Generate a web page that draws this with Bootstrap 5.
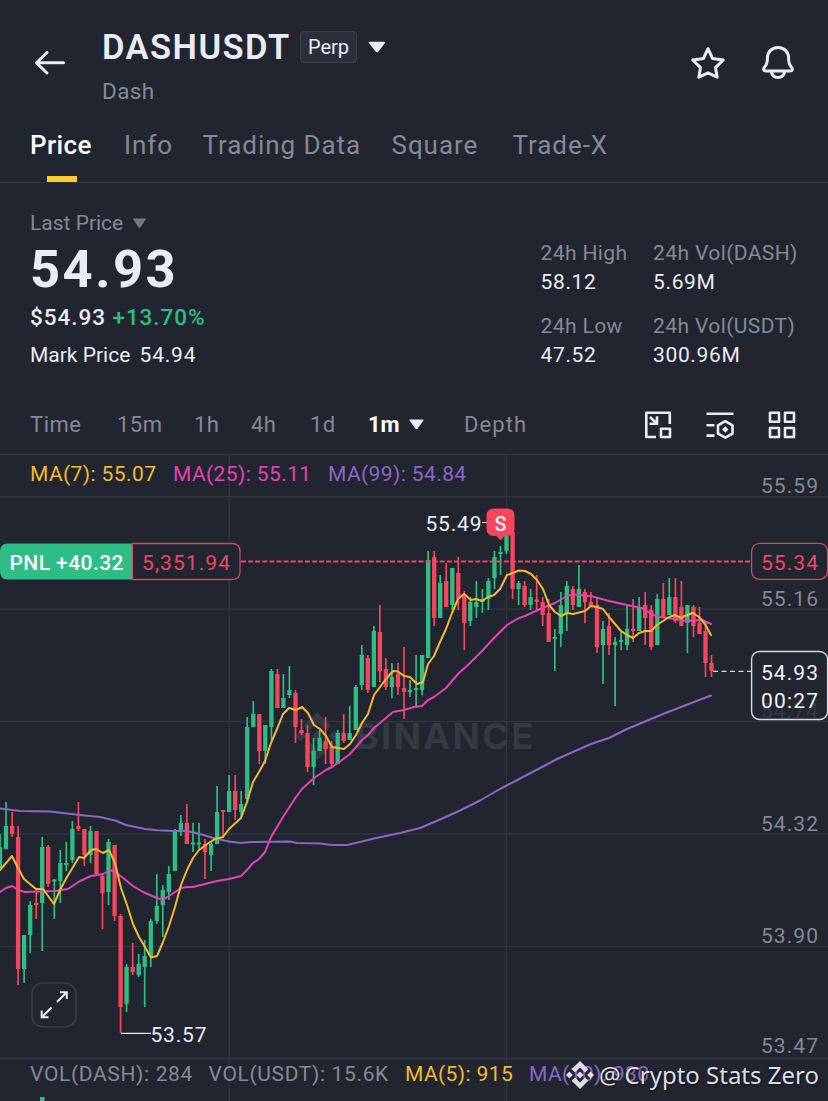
<!DOCTYPE html>
<html lang="en">
<head>
    <meta charset="UTF-8">
    <meta name="viewport" content="width=device-width, initial-scale=1">
    <title>DASHUSDT Perp</title>
    <link href="https://cdn.jsdelivr.net/npm/bootstrap@5.3.0/dist/css/bootstrap.min.css" rel="stylesheet">
    <style>
        body {
            background-color: #21252f;
            color: #eaecf5;
            font-family: Roboto, "Liberation Sans", sans-serif;
            width: 828px;
            height: 1101px;
            overflow: hidden;
        }

        svg {
            display: block;
            flex-shrink: 0;
        }

        .soft {
            color: #858995;
        }

        .up {
            color: #2ebd85;
        }

        /* Header */
        .top-bar {
            height: 126px;
            padding: 0 33px;
        }

        .pair-box {
            margin: 10px 0 0 36px;
        }

        .pair-name {
            font-size: 34.5px;
            font-weight: 600;
            line-height: 46px;
            width: 198px;
            letter-spacing: 1.45px;
        }

        .perp-tag {
            width: 57px;
            height: 32px;
            line-height: 30px;
            font-size: 20px;
            text-align: center;
            background-color: #2a2f3a;
            border: 1px solid #3a3f4b;
            border-radius: 4px;
            margin-right: 11px;
        }

        .pair-sub {
            font-size: 22.5px;
            line-height: 43px;
            height: 42px;
            letter-spacing: .4px;
        }

        .top-icons {
            gap: 36px;
        }

        /* Tabs */
        .tab-bar {
            display: grid;
            grid-template-columns: 94px 78.5px 189px 121px auto;
            height: 57px;
            padding-left: 30px;
            border-bottom: 1px solid #2f343f;
            font-size: 26px;
            line-height: 38px;
            letter-spacing: .95px;
            white-space: nowrap;
        }

        .tab-active {
            font-weight: 500;
            letter-spacing: .4px;
        }

        .tab-line {
            width: 30px;
            height: 6px;
            margin: 12px 0 0 17px;
            background-color: #fccb2f;
        }

        /* Price summary */
        .summary {
            height: 214px;
            padding: 27px 30px 0 30px;
        }

        .last-label {
            font-size: 21px;
            line-height: 27px;
        }

        .last-label svg {
            margin-left: 9px;
        }

        .last-price {
            font-size: 52.5px;
            font-weight: 700;
            line-height: 65px;
            height: 63px;
            letter-spacing: 2.5px;
        }

        .fiat-line {
            font-size: 22.5px;
            font-weight: 500;
            line-height: 34px;
            letter-spacing: .95px;
        }

        .mark-line {
            font-size: 21px;
            line-height: 42px;
        }

        .mark-num {
            margin-left: 4px;
            letter-spacing: .8px;
        }

        .stats {
            display: grid;
            grid-template-columns: 112.5px 145px;
            row-gap: 16px;
            padding-top: 29px;
            font-size: 21px;
            letter-spacing: .4px;
            white-space: nowrap;
            align-content: start;
        }

        .stats .soft {
            line-height: 29px;
        }

        .stats .stat-num {
            line-height: 28px;
            letter-spacing: .65px;
        }

        /* Intervals */
        .interval-bar {
            height: 58px;
            border-bottom: 1px solid #2f343f;
            padding: 0 32px 2px 30px;
            font-size: 22px;
        }

        .interval-list {
            display: grid;
            grid-template-columns: 87px 77px 57px 59px 58px 96px 64px;
            line-height: 55px;
            letter-spacing: .5px;
        }

        .interval-list .fw-bold {
            letter-spacing: 0;
        }

        .interval-list .depth-link {
            letter-spacing: 1.1px;
        }

        /* Chart */
        .chart-box {
            height: 646px;
            font-size: 21px;
        }

        .legend {
            left: 30px;
            display: grid;
            line-height: 28px;
            letter-spacing: .4px;
            white-space: nowrap;
        }

        .legend-ma {
            top: 5px;
            grid-template-columns: 143px 155px 140px;
        }

        .legend-vol {
            top: 605px;
            grid-template-columns: 178.5px 196.5px 124px 120px;
        }

        .legend-vol .vol-num {
            letter-spacing: .65px;
        }

        .ma-a {
            color: #f2bb2b;
        }

        .ma-b {
            color: #e443b4;
        }

        .ma-c {
            color: #8a68c2;
        }

        .credit {
            right: 9px;
            top: 603px;
            gap: 5px;
            font-family: "Noto Sans", sans-serif;
            font-size: 24px;
            line-height: 34px;
            color: #dddee2;
            text-shadow: 1px 1px 2px rgba(0, 0, 0, .6);
            white-space: nowrap;
        }

        .chart-box text {
            font-size: 21px;
        }
    </style>
</head>
<body>

<header class="top-bar d-flex align-items-center">
    <svg width="33" height="28" viewBox="33 49 33 28" fill="none" stroke="#eaecf5" stroke-width="3" stroke-linecap="round" stroke-linejoin="round">
        <path d="M47 52.5 36.5 62.8 47 73M37 62.8h26.5"/>
    </svg>
    <div class="pair-box">
        <div class="d-flex align-items-center">
            <span class="pair-name">DASHUSDT</span>
            <span class="perp-tag">Perp</span>
            <svg width="18" height="12" viewBox="0 0 18 12"><path d="M1.5.7h15q1.2.2.5 1.4L10.2 10.8q-1.2 1-2.4 0L.9 2.1Q.3.9 1.5.7z" fill="#eaecf5"/></svg>
        </div>
        <div class="pair-sub soft">Dash</div>
    </div>
    <div class="top-icons d-flex ms-auto">
        <svg width="34" height="34" viewBox="691 46 34 34" fill="none" stroke="#eaecf5" stroke-width="3" stroke-linejoin="round">
            <path d="M708 48.7 712.6 58.6 723.2 60 715.5 67.6 717.2 77.2 708 72.9 698.8 77.2 700.5 67.6 692.8 60 703.4 58.6z"/>
        </svg>
        <svg width="34" height="34" viewBox="761 46 34 34" fill="none" stroke="#eaecf5" stroke-width="3" stroke-linejoin="round">
            <path d="M778 47.6c-6.5 0-10.6 4.6-10.6 10.6 0 4.5-.4 6.3-2.6 8.500-1.900 2-1.300 4.300 1.200 4.300h24c2.500 0 3.100-2.300 1.200-4.300-2.200-2.200-2.600-4-2.600-8.500 0-6-4.100-10.600-10.600-10.600z"/>
            <path d="M771.3 71.5c.6 3.600 3.200 6 6.700 6s6.100-2.400 6.700-6"/>
        </svg>
    </div>
</header>

<nav class="tab-bar soft">
    <div class="tab-active text-white">Price<div class="tab-line"></div></div>
    <div>Info</div>
    <div>Trading Data</div>
    <div>Square</div>
    <div>Trade-X</div>
</nav>

<section class="summary d-flex justify-content-between">
    <div>
        <div class="last-label soft d-flex align-items-center">Last Price
            <svg width="15" height="11" viewBox="0 0 15 11"><path d="M.8.5h13.4L8.5 9.5q-1 .9-2 0z" fill="#737784"/></svg>
        </div>
        <div class="last-price">54.93</div>
        <div class="fiat-line">$54.93 <span class="up">+13.70%</span></div>
        <div class="mark-line">Mark Price <span class="mark-num">54.94</span></div>
    </div>
    <div class="stats">
        <div>
            <div class="soft">24h High</div>
            <div class="stat-num">58.12</div>
        </div>
        <div>
            <div class="soft">24h Vol(DASH)</div>
            <div class="stat-num">5.69M</div>
        </div>
        <div>
            <div class="soft">24h Low</div>
            <div class="stat-num">47.52</div>
        </div>
        <div>
            <div class="soft">24h Vol(USDT)</div>
            <div class="stat-num">300.96M</div>
        </div>
    </div>
</section>

<section class="interval-bar d-flex align-items-center justify-content-between">
    <div class="interval-list soft">
        <span>Time</span>
        <span>15m</span>
        <span>1h</span>
        <span>4h</span>
        <span>1d</span>
        <span class="text-white fw-bold d-flex align-items-center">1m
            <svg class="ms-2" width="16" height="11" viewBox="-1 0 16 11"><path d="M1 .5h13q.9.3.3 1.2L8.500 9.700q-1 .9-2 0L.7 1.700Q.1.800 1 .5z" fill="#eaecf5"/></svg>
        </span>
        <span class="depth-link">Depth</span>
    </div>
    <svg width="152" height="28" viewBox="644 411 152 28" fill="none" stroke="#eaecf5" stroke-width="2.6">
        <!-- shrink window -->
        <path d="M656 437H646.3V412.7H669.8V424" stroke-linejoin="round"/>
        <path d="M661 428.7h9v8.3h-9z" stroke-linejoin="round"/>
        <path d="M650 417l6.5 6.2M657 416.3v7.400h-7.500"/>
        <!-- indicator settings -->
        <path d="M706.5 413.8H733.5M706.5 425.2H714.5M706.5 435.6H714.5"/>
        <path d="M725.3 421.2 732.5 425.3V433.6L725.3 437.7 718 433.6V425.3z" stroke-linejoin="round"/>
        <path d="M725.3 426.3 728.5 429.5 725.3 432.7 722.1 429.5z" fill="#eaecf5" stroke="none"/>
        <!-- layout grid -->
        <path d="M770 412.7h9v9h-9zM785 412.7h9v9h-9zM770 428h9v9h-9zM785 428h9v9h-9z" stroke-linejoin="round"/>
    </svg>
</section>

<section class="chart-box position-relative">
    <svg width="828" height="646" viewBox="0 455 828 646">
        <g stroke="#2f343f" stroke-width="1.3">
            <path d="M0 496.7H828M0 609.2H828M0 721.5H828M0 834H828M0 946.3H828M229.2 455V1101M506.5 455V1101"/>
            <path d="M0 1058.8H828" stroke-width="2"/>
        </g>

        <!-- watermark -->
        <g fill="#353943">
            <path d="M317.3 712 331 725.7 325.7 731 317.3 722.6 308.9 731 303.6 725.7zM317.3 760 303.6 746.3 308.9 741 317.3 749.4 325.7 741 331 746.3zM317.3 730.5 322.8 736 317.3 741.5 311.8 736zM300.5 730.5 306 736 300.5 741.5 295 736zM334.1 730.5 339.6 736 334.1 741.5 328.6 736z"/>
            <text x="355" y="749" textLength="178" style="font: 700 36px Inter, sans-serif">BINANCE</text>
        </g>

        <g id="candles"></g>

        <path d="M241 561.5H751" stroke="#ee4560" stroke-width="2" stroke-dasharray="5 2.1"/>

        <g id="averages" fill="none" stroke-width="2" stroke-linejoin="round" stroke-linecap="round"></g>

        <!-- high and low marks -->
        <path d="M482 522.5h6M121 1033.4h30" stroke="#eaecf5" stroke-width="1.2"/>
        <path d="M494 508.5h13q7.5 0 7.5 7.5v12.5q0 7.5-7.5 7.5h-2.5l-4 4.5-4-4.5h-2.5q-7.5 0-7.5-7.5V516q0-7.5 7.5-7.5z" fill="#f6465d"/>
        <g fill="#eaecf5">
            <text x="494.5" y="531" font-weight="500" textLength="12" lengthAdjust="spacingAndGlyphs">S</text>
            <text x="425.5" y="530.5" textLength="56">55.49</text>
            <text x="150.5" y="1042" textLength="56">53.57</text>
        </g>
        <path d="M713 671.3h38" stroke="#d8dae2" stroke-width="1.2" stroke-dasharray="5 3.5"/>

        <!-- price scale -->
        <g fill="#858995">
            <text x="761" y="493.3" textLength="57">55.59</text>
            <text x="761" y="605.5" textLength="57">55.16</text>
            <text x="761" y="718" textLength="57">54.74</text>
            <text x="761" y="830.5" textLength="57">54.32</text>
            <text x="761" y="942.5" textLength="57">53.90</text>
            <text x="761" y="1053.3" textLength="57">53.47</text>
        </g>

        <!-- open position -->
        <path d="M8 543.5H132.5V579.5H8Q0 579.5 0 571.5V551.5Q0 543.5 8 543.5z" fill="#2ebd85"/>
        <path d="M132.5 543.5H232q8 0 8 8v20q0 8-8 8H132.5z" fill="#21252f" stroke="#c94a60" stroke-width="1.3"/>
        <text x="9.5" y="569.5" textLength="114" font-weight="500" fill="#ffffff">PNL +40.32</text>
        <text x="142" y="569.5" textLength="88" fill="#ee4560">5,351.94</text>
        <rect x="751.6" y="543.3" width="76" height="36" rx="8" fill="#21252f" stroke="#c94a60" stroke-width="1.3"/>
        <text x="761" y="569.5" textLength="57" fill="#ee4560">55.34</text>

        <!-- current price -->
        <rect x="751.6" y="651.5" width="76" height="68" rx="8" fill="#21252f" fill-opacity=".8" stroke="#d8dae2" stroke-width="1.4"/>
        <g fill="#f2f3f8">
            <text x="761" y="679.5" textLength="57">54.93</text>
            <text x="761" y="707.5" textLength="57">00:27</text>
        </g>

        <!-- expand button -->
        <rect x="32" y="983" width="44" height="44" rx="11" fill="#21252f" stroke="#373c47" stroke-width="1.6"/>
        <path d="M57 1002 66.5 992.5M60 992.3H66.8V999M51.5 1007.5 42 1017M48.5 1017.2H41.7V1010.5" fill="none" stroke="#eaecf5" stroke-width="2"/>

        <path d="M42.3 1097V1101" stroke="#2ebd85" stroke-width="4.5"/>
    </svg>

    <div class="legend legend-ma position-absolute">
        <span class="ma-a">MA(7): 55.07</span>
        <span class="ma-b">MA(25): 55.11</span>
        <span class="ma-c">MA(99): 54.84</span>
    </div>
    <div class="legend legend-vol position-absolute soft">
        <span class="vol-num">VOL(DASH): 284</span>
        <span class="vol-num">VOL(USDT): 15.6K</span>
        <span class="ma-a">MA(5): 915</span>
        <span class="ma-c">MA(10): 930</span>
    </div>
    <div class="credit position-absolute d-flex align-items-center">
        <svg width="28" height="28" viewBox="0 0 28 28" fill="#dddee2">
            <path d="M14 0 22.3 8.3 19 11.5 14 6.5 9 11.5 5.7 8.3zM14 28 5.7 19.7 9 16.5 14 21.5 19 16.5 22.3 19.7zM14 10.6 17.4 14 14 17.4 10.6 14zM3.4 10.6 6.8 14 3.4 17.4 0 14zM24.6 10.6 28 14 24.6 17.4 21.2 14z"/>
        </svg>
        <span><span class="me-1">@</span>Crypto Stats Zero</span>
    </div>
</section>

<script src="https://cdn.jsdelivr.net/npm/bootstrap@5.3.0/dist/js/bootstrap.bundle.min.js"></script>
<script>
    // one candle per entry: direction, high, body top, body bottom, low
    const candles = `
      g 834 847 868 868|g 802 826 849 849|r 812 826 834 837|r 826 837 969 985|g 935 935 969 983|g 901 905 935 953
      r 890 903 905 919|g 837 847 903 951|r 845 847 884 887|g 879 879.5 881 919|g 850 863 881 903|g 842 863 865 871
      g 821 829 860 863|r 802 826 829 831|r 829 829 855 866|g 826 831 855 863|r 831 831 874 874|r 874 876 893 929
      g 839 842 892 905|r 845 845 916 921|r 914 916 1007 1033|g 964 967 1004 1012|r 943 967 972 975|g 954 964 975 977
      g 940 956 967 1007|g 919 921 956 967|g 874 906 921 924|g 885 890 905 937|g 866 874 892 900|g 829 831 871 871
      g 815 823 831 836|r 804 823 844 844|g 823 842.5 844.5 852|g 823 842.5 844.5 849|r 839 844 852 879|g 842 844 855 871
      g 786 812 844 844|r 810 810 812 838|g 775 791 812 812|r 775 791 810 820|g 791 804 812 817|g 717 727 799 802
      g 701 714 727 727|r 714 714 751 764|g 725 725 751 764|g 669 671 727 740|r 669 674 708 708|g 674 698 708 708
      g 666 690 695 698|r 690 693 727 743|r 719 730 733 735|r 725 733 767 772|g 738 751 767 785|g 730 738 751 751
      r 717 741 749 764|r 741 747 764 766|g 730 733 764 764|r 714 733 741 743|g 706 733 740 740|g 685 687 730 730
      g 645 655 685 690|r 655 658 690 693|g 626 631 687 687|r 605 632 671 682|r 658 669 687 690|g 663 677 687 698
      r 663 674 687 695|r 647 688 692 719|g 680 690 692 697|g 655 688 690 708|g 655 655 690 695|g 551 560 658 658
      r 551 557 618 626|g 575 583 618 618|r 563 581 607 607|g 568 568 605 610|r 557 573 599 610|r 591 594 623 650
      g 597 602 621 626|g 581 602 607 618|g 589 599 602 613|g 578 581 599 610|g 551 557 578 589|g 546 552 554 575
      g 533 536 551 554|r 520 532 589 599|g 581 583 589 605|r 581 586 605 607|g 589 597 605 610|r 575 599.5 602 610
      r 597 602 615 626|r 599 613 642 642|g 629 637 639 671|g 592 605 634 647|g 581 586 613 631|r 586 589 605 610
      g 565 589 607 607|r 589 592 602 623|r 592 602 607 607|r 597 605 647 653|g 621 629 645 684|r 613 626 645 655
      g 637 642 645 706|g 632 640 642 650|g 605 629 645 650|r 599 629 631 642|g 597 607 631 631|r 592 605 618 645
      r 605 610 647 650|g 594 599 645 645|r 583 599 618 618|g 578 597 615 615|r 578 597 621 623|r 581 607 626 626
      g 605 605 623 653|r 605 607 626 637|r 607 623 634 634|r 623 631 663 677|r 655 663 671 677`;

    const averages = {
      "#8a68c2": "0,808.5 20,811 50,811.5 80,815 100,817 115,820.5 126,825 145,829 157,830.3 175,831 187,831 200,834 215,838.5 229,841.5 241,843 250,842 290,841.5 297,843 320,843.5 332,845 347,845 358,842.5 374,838.5 400,833 420,828 440,819.5 460,810.5 480,800.5 500,789 520,778.5 545,765.5 557,759 591,744 609,738 627,729 663,714 699,700 711,695.5",
      "#e443b4": "0,892 6,888 12,886 18,890 25,892 55,891 68,889 80,881 91,876 103,874 110,870 115,872 122,877 133,886 143,892 157,898 163,900 169,896 175,892 181,888 187,887 193,887 217,881 229,879 241,876 247,870 253,863 259,859 265,852 271,837 283,817 296,797 302,789 314,778 326,770 332,767 338,763 350,754 362,740 368,735 374,728 393,712 404,710 414,707 422,706 428,700 434,697 446,688 458,674 470,663 482,651 494,638 507,625 519,618 525,616 540,609 555,603 567,596 573,594.5 591,596 609,601 627,605 642,608 651,614 660,617 675,619 687,621 702,620 711,624",
      "#f2bb2b": "0,870 12,856 18,868 24,879 30,884 36,889 43,889 54,904 61,888 67,877 79,857 84,858 91,850 96,849 103,853 109,850 115,863 121,888 127,905 133,924 139,937 145,947 151,957.5 157,956 163,942 169,926 175,907 181,885 187,870 193,858 199,850 207,844 215,839 223,837 229,829 241,818 247,802 253,782 259,772 265,761 271,743 277,729 283,714 289,708 296,710 302,707 308,713 314,725 320,729 326,736 332,747 344,749 350,744 356,735 362,723 368,714 374,695 380,687 386,679 393,671 398,671.5 404,676 410,677 417,684 423,682 428,664 434,656 440,642 446,629 452,613 458,599 464,594 471,600 476,599 482,601 488,597 494,595 500,589 507,575 513,573 519,570.5 525,571 531,574 537,580 543,589 549,605 555,612 561,616 567,613 573,614 585,611 591,606 597,607 603,609 609,617 615,624 621,631 627,635 633,638 639,633 645,631 651,631 657,625 663,621 669,617 675,615 681,618 687,615 693,613 699,617 705,624 711,635"
    };

    const step = 6.03;

    function drawCandles() {
      let html = "";
      candles.trim().split(/[|\n]/).forEach((row, i) => {
        const [dir, high, top, bottom, low] = row.trim().split(" ");
        const x = (i * step).toFixed(1);
        const color = dir === "g" ? "#2ebd85" : "#f6465d";
        const end = Math.max(+bottom, +top + 2);
        html += `<path d="M${x} ${high}V${low}" stroke="${color}" stroke-width="1.7"/>`;
        html += `<path d="M${x} ${top}V${end}" stroke="${color}" stroke-width="4.3"/>`;
      });
      document.getElementById("candles").innerHTML = html;
    }

    function drawAverages() {
      let html = "";
      Object.entries(averages).forEach(([color, points]) => {
        html += `<polyline points="${points}" stroke="${color}"/>`;
      });
      document.getElementById("averages").innerHTML = html;
    }

    drawCandles();
    drawAverages();
</script>
</body>
</html>
